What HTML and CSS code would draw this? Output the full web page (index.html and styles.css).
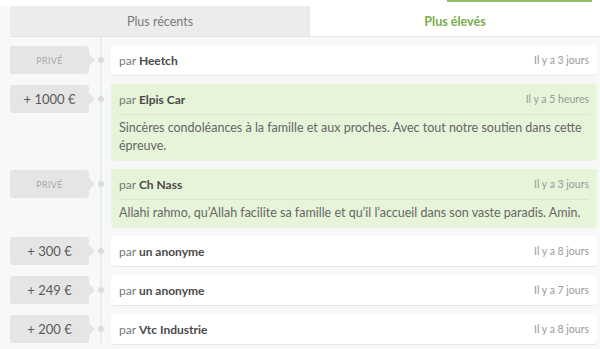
FILE: index.html
```html
<!DOCTYPE html>
<html lang="fr">
<head>
  <meta charset="UTF-8">
  <meta name="viewport" content="width=device-width, initial-scale=1.0">
  <title>Contributions</title>
  <link rel="stylesheet" href="styles.css">
</head>

<body>
  <!-- Top strip (button edge) -->
  <div class="top">
    <span class="top-button"></span>
  </div>

  <!-- Tabs -->
  <div class="tabs">
    <div class="tab">Plus récents</div>
    <div class="tab active">Plus élevés</div>
  </div>

  <!-- Contributions -->
  <ul class="feed">
    <li class="item">
      <div class="badge private">Privé</div>
      <span class="dot"></span>
      <div class="card">
        <div class="card-head"><span class="by">par <b>Heetch</b></span><span class="time">Il y a 3 jours</span></div>
      </div>
    </li>

    <li class="item">
      <div class="badge">+ 1000 €</div>
      <span class="dot"></span>
      <div class="card message">
        <div class="card-head"><span class="by">par <b>Elpis Car</b></span><span class="time">Il y a 5 heures</span></div>
        <p class="card-text">Sincères condoléances à la famille et aux proches. Avec tout notre soutien dans cette épreuve.</p>
      </div>
    </li>

    <li class="item">
      <div class="badge private">Privé</div>
      <span class="dot"></span>
      <div class="card message">
        <div class="card-head"><span class="by">par <b>Ch Nass</b></span><span class="time">Il y a 3 jours</span></div>
        <p class="card-text">Allahi rahmo, qu’Allah facilite sa famille et qu’il l’accueil dans son vaste paradis. Amin.</p>
      </div>
    </li>

    <li class="item">
      <div class="badge">+ 300 €</div>
      <span class="dot"></span>
      <div class="card">
        <div class="card-head"><span class="by">par <b>un anonyme</b></span><span class="time">Il y a 8 jours</span></div>
      </div>
    </li>

    <li class="item">
      <div class="badge">+ 249 €</div>
      <span class="dot"></span>
      <div class="card">
        <div class="card-head"><span class="by">par <b>un anonyme</b></span><span class="time">Il y a 7 jours</span></div>
      </div>
    </li>

    <li class="item">
      <div class="badge">+ 200 €</div>
      <span class="dot"></span>
      <div class="card">
        <div class="card-head"><span class="by">par <b>Vtc Industrie</b></span><span class="time">Il y a 8 jours</span></div>
      </div>
    </li>
  </ul>
</body>
</html>
```

FILE: styles.css
```css
body {
  font-family: 'Lato', sans-serif;
  margin: 0;
  padding: 0;
  background-color: #f7f8f8;
  color: #555;
  overflow: hidden;
}

/* Top strip */
.top {
  height: 6px;
  background: #fff;
}

.top-button {
  display: block;
  margin-left: 447px;
  width: 145px;
  height: 2px;
  background: #8fbf67;
}

/* Tabs */
.tabs {
  display: flex;
  margin-left: 10px;
  height: 30px;
  border-bottom: 1px solid #e4e4e4;
}

.tab {
  flex: 0 0 300px;
  display: flex;
  align-items: center;
  justify-content: center;
  background: #ececec;
  color: #7a7a7a;
  font-size: 12.5px;
  border-bottom-left-radius: 3px;
}

.tab.active {
  flex: 1;
  background: #fff;
  color: #79ad4b;
  font-weight: bold;
  border-radius: 0;
}

/* Feed */
.feed {
  list-style: none;
  margin: 0;
  padding: 8px 3px 0 10px;
  position: relative;
}

.feed::before {
  content: "";
  position: absolute;
  left: 100px;
  top: 0;
  bottom: 0;
  width: 2px;
  background: #ececec;
}

.item {
  display: flex;
  align-items: flex-start;
  margin-bottom: 9px;
}

.badge {
  position: relative;
  flex: 0 0 79px;
  height: 28px;
  margin-top: 1px;
  background: #e5e5e5;
  border-radius: 3px;
  display: flex;
  align-items: center;
  justify-content: center;
  font-size: 13px;
  color: #5a5a5a;
}

.badge::after {
  content: "";
  position: absolute;
  right: -6px;
  top: 8px;
  border-left: 6px solid #e5e5e5;
  border-top: 6px solid transparent;
  border-bottom: 6px solid transparent;
}

.badge.private {
  font-size: 9px;
  text-transform: uppercase;
  letter-spacing: 0.3px;
  color: #a9a9a9;
}

.dot {
  flex: 0 0 22px;
  height: 30px;
  display: flex;
  align-items: center;
  justify-content: center;
  position: relative;
  z-index: 1;
}

.dot::before {
  content: "";
  width: 6px;
  height: 6px;
  border-radius: 50%;
  background: #dcdcdc;
  margin-left: 1px;
}

.card {
  flex: 1;
  background: #fff;
  border-radius: 3px;
  box-shadow: 0 1px 0 #e7e7e7;
  padding: 0 8px;
}

.card.message {
  background: #e6f4d9;
  box-shadow: 0 1px 0 #eef0ec;
}

.card-head {
  height: 30px;
  display: flex;
  align-items: center;
  justify-content: space-between;
  font-size: 12px;
}

.card.message .card-head {
  border-bottom: 1px solid #d8e9c9;
}

.by {
  color: #777;
}

.by b {
  color: #4a4a4a;
}

.time {
  font-size: 10.5px;
  color: #999;
}

.card-text {
  margin: 0;
  padding: 4px 0 5px;
  font-size: 12.5px;
  line-height: 18px;
  color: #666;
}
```
